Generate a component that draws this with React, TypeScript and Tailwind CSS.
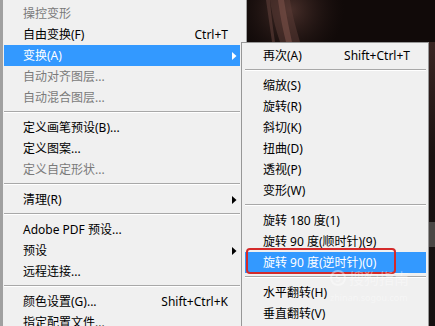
import React from "react";

type Item =
  | { sep: true }
  | { sep?: false; label: string; shortcut?: string; disabled?: boolean; arrow?: boolean; active?: boolean };

const mainItems: Item[] = [
  { label: "操控变形", disabled: true },
  { label: "自由变换(F)", shortcut: "Ctrl+T" },
  { label: "变换(A)", arrow: true, active: true },
  { label: "自动对齐图层...", disabled: true },
  { label: "自动混合图层...", disabled: true },
  { sep: true },
  { label: "定义画笔预设(B)..." },
  { label: "定义图案..." },
  { label: "定义自定形状...", disabled: true },
  { sep: true },
  { label: "清理(R)", arrow: true },
  { sep: true },
  { label: "Adobe PDF 预设..." },
  { label: "预设", arrow: true },
  { label: "远程连接..." },
  { sep: true },
  { label: "颜色设置(G)...", shortcut: "Shift+Ctrl+K" },
  { label: "指定配置文件..." },
];

const subItems: Item[] = [
  { label: "再次(A)", shortcut: "Shift+Ctrl+T" },
  { sep: true },
  { label: "缩放(S)" },
  { label: "旋转(R)" },
  { label: "斜切(K)" },
  { label: "扭曲(D)" },
  { label: "透视(P)" },
  { label: "变形(W)" },
  { sep: true },
  { label: "旋转 180 度(1)" },
  { label: "旋转 90 度(顺时针)(9)" },
  { label: "旋转 90 度(逆时针)(0)", active: true },
  { sep: true },
  { label: "水平翻转(H)" },
  { label: "垂直翻转(V)" },
];

function Arrow({ white }: { white?: boolean }) {
  return (
    <svg width="5" height="8" viewBox="0 0 5 8" className="shrink-0">
      <path d="M0 0 L4.5 4 L0 8 Z" fill={white ? "#ffffff" : "#000000"} />
    </svg>
  );
}

function Sep() {
  return (
    <div className="h-[9px] pt-[3px]">
      <div className="h-px bg-[#a8a8a8]" />
      <div className="h-px bg-white" />
    </div>
  );
}

function Row({ item, textPad, rightPad }: { item: Item; textPad: string; rightPad: string }) {
  if (item.sep) return <Sep />;
  const color = item.active ? "text-white bg-[#3399ff]" : item.disabled ? "text-[#7a7a7a]" : "text-black";
  return (
    <div className={`flex h-[21px] items-center ${textPad} ${rightPad} ${color}`}>
      <span className="flex-1 whitespace-nowrap leading-none">{item.label}</span>
      {item.shortcut && <span className="whitespace-nowrap leading-none">{item.shortcut}</span>}
      {item.arrow && <Arrow white={item.active} />}
    </div>
  );
}

export default function App() {
  return (
    <div
      className="relative h-[326px] w-[435px] overflow-hidden bg-[#120c0b] text-[12px]"
      style={{ fontFamily: '"Noto Sans", "Noto Sans CJK SC", sans-serif' }}
    >
      {/* background photo */}
      <svg className="absolute inset-0" width="435" height="326" viewBox="0 0 435 326">
        <defs>
          <radialGradient id="glow" cx="290" cy="10" r="90" gradientUnits="userSpaceOnUse">
            <stop offset="0" stopColor="#4a302b" />
            <stop offset="0.6" stopColor="#23161400" />
            <stop offset="1" stopColor="#12090800" />
          </radialGradient>
          <linearGradient id="right" x1="0" y1="0" x2="0" y2="1">
            <stop offset="0" stopColor="#3a2522" />
            <stop offset="0.4" stopColor="#1a1110" />
            <stop offset="1" stopColor="#141010" />
          </linearGradient>
        </defs>
        <rect x="0" y="0" width="435" height="326" fill="#110a09" />
        <rect x="0" y="0" width="435" height="326" fill="url(#glow)" />
        <path d="M270 0 C272 15 276 30 280 42 L300 42 C296 28 292 14 290 0 Z" fill="#5a3a34" opacity="0.55" />
        <path d="M278 0 C280 15 283 30 286 42 L292 42 C289 28 286 14 284 0 Z" fill="#7a5048" opacity="0.6" />
        <path d="M266 0 C268 14 270 28 272 42 L275 42 C273 28 271 14 270 0 Z" fill="#6a4640" opacity="0.5" />
        <rect x="429" y="42" width="6" height="284" fill="url(#right)" />
        <rect x="429" y="222" width="6" height="25" fill="#4a4644" />
      </svg>

      {/* main menu */}
      <div className="relative w-[247px] border-l-[3px] border-r border-[#a0a0a0] bg-[#f0f0f0] pt-[3px]">
        <div className="pl-px pr-[6px]">
          {mainItems.map((it, i) => (
            <Row key={i} item={it} textPad="pl-[19px]" rightPad={it.sep ? "" : it.arrow ? "pr-[3px]" : "pr-[12px]"} />
          ))}
        </div>
      </div>

      {/* submenu */}
      <div className="absolute left-[241px] top-[42px] w-[188px] border border-[#979797] bg-[#f0f0f0] pt-[2px] pl-[3px] pr-[2px] pb-[4px]">
        {subItems.map((it, i) => (
          <Row key={i} item={it} textPad="pl-[18px]" rightPad="pr-[16px]" />
        ))}
        <div className="absolute left-[4px] top-[205px] h-[26px] w-[150px] rounded-[4px] border-2 border-[#d42a2a]" />
        <div className="absolute left-[88px] top-[227px] flex items-center gap-[3px] text-[15px] leading-none text-white/40">
          <span className="flex h-[16px] w-[16px] items-center justify-center rounded-full border-2 border-white/40 text-[10px] font-bold">S</span>
          <span>搜狗指南</span>
        </div>
        <div className="absolute left-[88px] top-[250px] text-[9px] leading-none text-white/40">zhinan.sogou.com</div>
      </div>
    </div>
  );
}
